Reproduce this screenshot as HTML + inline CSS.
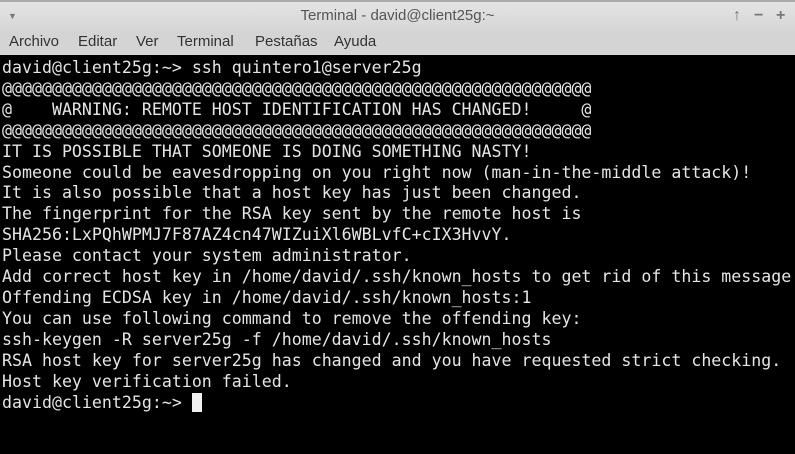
<!DOCTYPE html>
<html><head><style>
body{margin:0;width:795px;height:454px;overflow:hidden;background:#000;font-family:"Liberation Sans",sans-serif}
#title{position:absolute;left:0;top:0;width:795px;height:31px;background:linear-gradient(#e4e4e4,#d6d6d6);border-top:2px solid #aaa;box-sizing:border-box}
#title .t{position:absolute;left:0;right:0;top:5px;text-align:center;font-size:15px;color:#555}
#title .ic{position:absolute;top:5px;font-size:16px;color:#777;font-weight:bold}
#menu{position:absolute;left:0;top:31px;width:795px;height:24px;background:#d4d4d4;font-size:15px;color:#333}
#menu span{position:absolute;top:2px}
#term{position:absolute;left:2px;top:58px;font-family:"DejaVu Sans Mono",monospace;font-size:16.6px;line-height:20.9px;color:#e5e5e5;white-space:pre}
.cur{display:inline-block;width:10px;height:19px;background:#f0f0f0;vertical-align:-4px}
</style></head><body>
<div id="title"><span class="ic" style="left:8px;font-size:9px;top:9px">▼</span><div class="t">Terminal - david@client25g:~</div>
<span class="ic" style="left:733px">↑</span><span class="ic" style="left:754px">−</span><span class="ic" style="left:776px">+</span></div>
<div id="menu"><span style="left:9px">Archivo</span><span style="left:78px">Editar</span><span style="left:136px">Ver</span><span style="left:177px">Terminal</span><span style="left:255px">Pestañas</span><span style="left:334px">Ayuda</span></div>
<div id="term">david@client25g:~&gt; ssh quintero1@server25g
@@@@@@@@@@@@@@@@@@@@@@@@@@@@@@@@@@@@@@@@@@@@@@@@@@@@@@@@@@@
@    WARNING: REMOTE HOST IDENTIFICATION HAS CHANGED!     @
@@@@@@@@@@@@@@@@@@@@@@@@@@@@@@@@@@@@@@@@@@@@@@@@@@@@@@@@@@@
IT IS POSSIBLE THAT SOMEONE IS DOING SOMETHING NASTY!
Someone could be eavesdropping on you right now (man-in-the-middle attack)!
It is also possible that a host key has just been changed.
The fingerprint for the RSA key sent by the remote host is
SHA256:LxPQhWPMJ7F87AZ4cn47WIZuiXl6WBLvfC+cIX3HvvY.
Please contact your system administrator.
Add correct host key in /home/david/.ssh/known_hosts to get rid of this message.
Offending ECDSA key in /home/david/.ssh/known_hosts:1
You can use following command to remove the offending key:
ssh-keygen -R server25g -f /home/david/.ssh/known_hosts
RSA host key for server25g has changed and you have requested strict checking.
Host key verification failed.
david@client25g:~&gt; <span class="cur"></span></div>
</body></html>
